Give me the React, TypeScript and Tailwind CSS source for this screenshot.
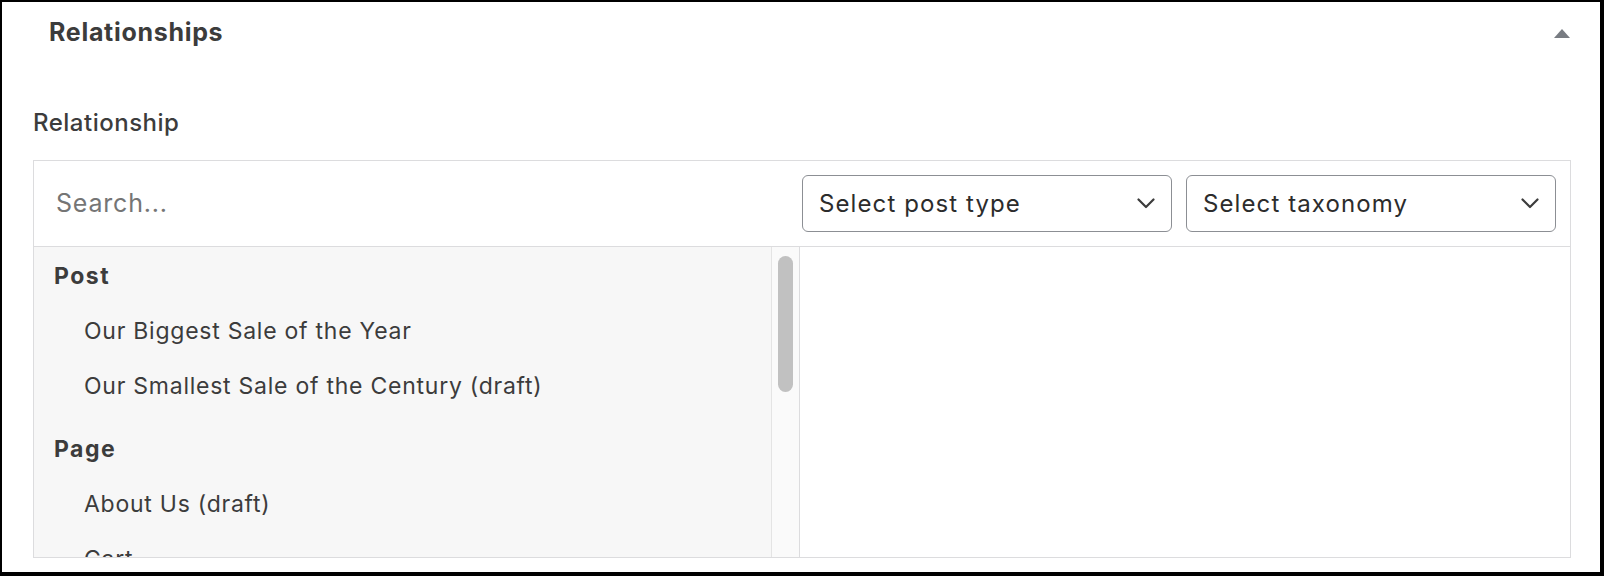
import { useState } from 'react';

interface Group {
  label: string;
  items: string[];
}

const groups: Group[] = [
  { label: 'Post', items: ['Our Biggest Sale of the Year', 'Our Smallest Sale of the Century (draft)'] },
  { label: 'Page', items: ['About Us (draft)', 'Cart', 'Checkout', 'Contact'] },
];

function Chevron() {
  return (
    <svg width="18" height="11" viewBox="0 0 18 11" fill="none">
      <polyline points="1.5,1.5 9,9 16.5,1.5" stroke="#3c3c3c" strokeWidth="2.2" strokeLinecap="round" strokeLinejoin="round" />
    </svg>
  );
}

function FakeSelect({ label }: { label: string }) {
  return (
    <div className="flex h-[57px] w-[370px] items-center justify-between rounded-[6px] border-[1.5px] border-[#8c8f94] bg-white pl-[16px] pr-[16px]">
      <span className="text-[24px] tracking-[1.1px] text-[#2c2c2c]">{label}</span>
      <Chevron />
    </div>
  );
}

export default function App() {
  const [query, setQuery] = useState('');

  return (
    <div
      className="box-border h-[576px] w-[1604px] border-b-4 border-l-2 border-r-4 border-t-2 border-black bg-white"
      style={{ fontFamily: 'Inter, "Noto Sans", sans-serif' }}
    >
      {/* Metabox header */}
      <div className="flex h-[62px] items-center justify-between pl-[47px] pr-[30px]">
        <h2 className="text-[25px] font-bold tracking-[0.7px] text-[#3c3c3c]">Relationships</h2>
        <svg width="16" height="9" viewBox="0 0 16 9">
          <polygon points="8,0 16,9 0,9" fill="#787c82" />
        </svg>
      </div>

      <div className="pl-[31px] pr-[29px]">
        <div className="mt-[44px] mb-[22px] text-[24px] font-medium leading-[30px] tracking-[0.5px] text-[#3c3c3c]">
          Relationship
        </div>

        <div className="border border-[#dcdcde]">
          {/* Filters */}
          <div className="flex h-[86px] items-center border-b border-[#dcdcde] pr-[14px]">
            <input
              value={query}
              onChange={(e) => setQuery(e.target.value)}
              placeholder="Search..."
              className="h-full flex-1 bg-transparent pl-[22px] pb-[2px] text-[25px] tracking-[0.8px] text-[#2c2c2c] outline-none placeholder:text-[#757575]"
            />
            <div className="flex gap-[14px]">
              <FakeSelect label="Select post type" />
              <FakeSelect label="Select taxonomy" />
            </div>
          </div>

          {/* Choices / values */}
          <div className="flex h-[310px]">
            <div className="flex w-[766px] overflow-hidden border-r border-[#dcdcde] bg-[#f7f7f7]">
              <ul className="flex-1 overflow-hidden border-r border-[#e4e4e4] pt-[2px]">
                {groups.map((group, i) => (
                  <li key={group.label} className={i > 0 ? 'mt-[8px]' : ''}>
                    <div className="flex h-[55px] items-center pl-[20px] text-[23px] font-bold tracking-[1.5px] text-[#3c3c3c]">
                      {group.label}
                    </div>
                    <ul>
                      {group.items.map((item) => (
                        <li key={item} className="flex h-[55px] items-center pl-[50px] text-[23px] tracking-[0.75px] text-[#3c3c3c]">
                          {item}
                        </li>
                      ))}
                    </ul>
                  </li>
                ))}
              </ul>
              {/* scrollbar */}
              <div className="w-[27px] bg-[#fafafa] pl-[6px] pt-[9px]">
                <div className="h-[136px] w-[15px] rounded-full bg-[#c1c1c1]" />
              </div>
            </div>
            <div className="flex-1 bg-white" />
          </div>
        </div>
      </div>
    </div>
  );
}
